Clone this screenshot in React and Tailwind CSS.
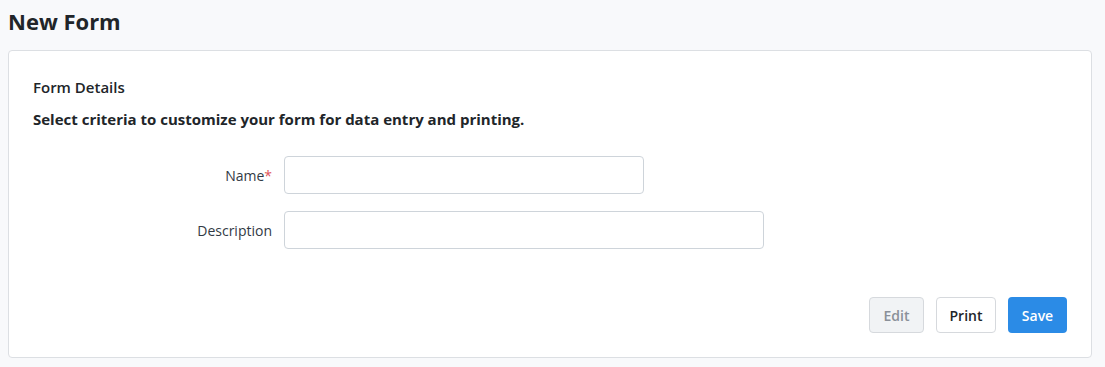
import React from 'react';

const font = { fontFamily: '"Open Sans", "Noto Sans", sans-serif' };

const Field = ({ label, required, width }) => (
    <div className="flex items-center">
        <label className="w-[239px] text-right text-[14px] text-[#323a45]">
            {label}
            {required && <span className="text-[#e0545a]">*</span>}
        </label>
        <input
            type="text"
            className={`ml-[12px] h-[38px] rounded-[4px] border border-[#ced4da] bg-white px-3 text-[14px] outline-none ${width}`}
        />
    </div>
);

const App = () => {
    return (
        <div className="min-h-screen bg-[#f8f9fb] pl-[8px] pr-[13px] pt-[6px] text-[#212529]" style={font}>
            <h1 className="text-[22px] font-bold leading-[30px] text-[#212529]">New Form</h1>
            <div className="mt-[14px] rounded-[4px] border border-[#dcdfe3] bg-white px-[24px] pt-[24px] pb-[24px]">
                <h2 className="text-[15px] font-semibold leading-[24px]">Form Details</h2>
                <p className="mt-[8px] text-[15px] font-bold leading-[24px]">
                    Select criteria to customize your form for data entry and printing.
                </p>
                <div className="mt-[25px] flex flex-col gap-[17px]">
                    <Field label="Name" required width="w-[360px]" />
                    <Field label="Description" width="w-[480px]" />
                </div>
                <div className="mt-[48px] flex justify-end gap-[12px]">
                    <button className="h-[36px] w-[55px] rounded-[4px] border border-[#d6d9dd] bg-[#f1f3f5] text-[14px] font-semibold text-[#8a9099]">
                        Edit
                    </button>
                    <button className="h-[36px] w-[60px] rounded-[4px] border border-[#d6d9dd] bg-white text-[14px] font-semibold text-[#212529]">
                        Print
                    </button>
                    <button className="h-[36px] w-[59px] rounded-[4px] bg-[#2b8be6] text-[14px] font-semibold text-white">
                        Save
                    </button>
                </div>
            </div>
        </div>
    );
};

export default App;
